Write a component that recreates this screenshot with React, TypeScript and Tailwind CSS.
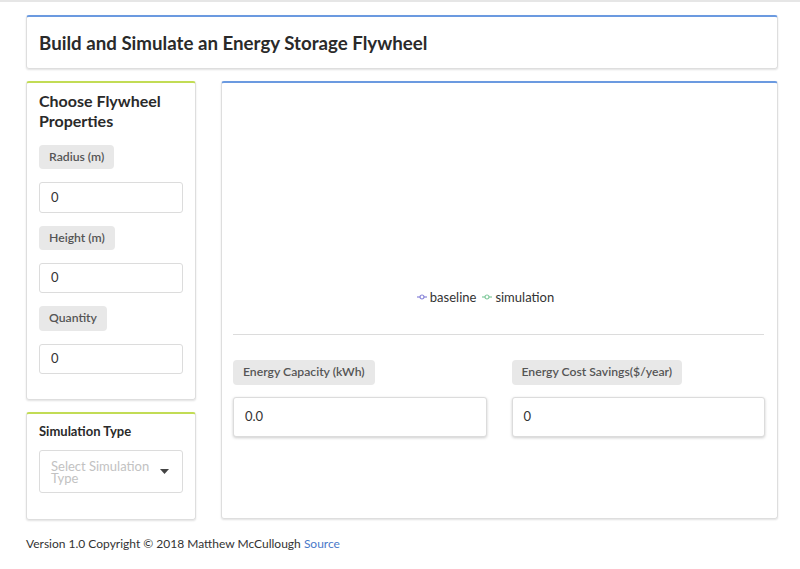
const font = { fontFamily: "Lato, 'Open Sans', sans-serif" };

function Pill({ children, h = "h-[24px]" }: { children: string; h?: string }) {
  return (
    <span className={`inline-flex ${h} items-center self-start rounded bg-[#e8e8e8] px-[10px] text-[12.2px] font-semibold text-[#555]`}>
      {children}
    </span>
  );
}

function Field({ value, h = "h-[31px]", shadow = false }: { value: string; h?: string; shadow?: boolean }) {
  return (
    <div
      className={`flex ${h} items-center rounded-[3px] border border-[#dcdcdc] bg-white px-[11px] text-[13px] text-[#333] ${
        shadow ? "shadow-[0_1px_3px_rgba(0,0,0,0.2)]" : ""
      }`}
    >
      {value}
    </div>
  );
}

function LegendIcon({ color }: { color: string }) {
  return (
    <svg width="10" height="10" viewBox="0 0 10 10" className="mr-[3px]">
      <line x1="0" y1="5" x2="10" y2="5" stroke={color} strokeWidth="1.2" />
      <circle cx="5" cy="5" r="2" fill="white" stroke={color} strokeWidth="1.2" />
    </svg>
  );
}

export default function App() {
  return (
    <div className="min-h-[569px] border-t-2 border-[#e6e6e6] bg-white px-[26px] pt-[13px] text-[#333]" style={font}>
      <div className="flex w-[752px] flex-col gap-[12px]">
        <div className="flex h-[54px] items-center rounded-[3px] border border-[#dedede] border-t-2 border-t-[#6b9ae0] px-[12px] shadow-[0_1px_2px_rgba(0,0,0,0.12)]">
          <h1 className="pt-[1px] text-[18.7px] font-bold text-[#2a2a2a]">Build and Simulate an Energy Storage Flywheel</h1>
        </div>

        <div className="flex gap-[25px]">
          <div className="flex w-[170px] flex-col gap-[12px]">
            <div className="flex flex-col gap-[13px] rounded-[3px] border border-[#dedede] border-t-2 border-t-[#c2dc55] px-[12px] pb-[25px] pt-[8px] shadow-[0_1px_2px_rgba(0,0,0,0.12)]">
              <h2 className="mb-[1px] text-[16px] font-bold leading-[20px] text-[#2a2a2a]">Choose Flywheel Properties</h2>
              <Pill>Radius (m)</Pill>
              <Field value="0" />
              <Pill>Height (m)</Pill>
              <Field value="0" h="h-[30px]" />
              <Pill h="h-[25px]">Quantity</Pill>
              <Field value="0" h="h-[30px]" />
            </div>

            <div className="flex h-[108px] flex-col gap-[11px] rounded-[3px] border border-[#dedede] border-t-2 border-t-[#c2dc55] px-[12px] pt-[9px] shadow-[0_1px_2px_rgba(0,0,0,0.12)]">
              <h3 className="text-[13px] font-bold leading-[16px] text-[#2a2a2a]">Simulation Type</h3>
              <div className="flex h-[43px] items-center justify-between rounded-[3px] border border-[#dcdcdc] pl-[11px] pr-[13px]">
                <span className="w-[100px] text-[13px] leading-[12px] text-[#c2c2c2]">Select Simulation Type</span>
                <svg width="9" height="5" viewBox="0 0 9 5">
                  <path d="M0 0 L9 0 L4.5 5 Z" fill="#444" />
                </svg>
              </div>
            </div>
          </div>

          <div className="flex h-[438px] flex-1 flex-col rounded-[3px] border border-[#dedede] border-t-2 border-t-[#6b9ae0] px-[11px] shadow-[0_1px_2px_rgba(0,0,0,0.12)]">
            <div className="flex h-[251px] items-end justify-center pb-[27px] pr-[28px] text-[13px] text-[#333]">
              <span className="flex items-center">
                <LegendIcon color="#8884d8" />
                baseline
              </span>
              <span className="ml-[6px] flex items-center">
                <LegendIcon color="#82ca9d" />
                simulation
              </span>
            </div>
            <div className="mr-[2px] border-t border-[#dcdcdc]" />
            <div className="mt-[25px] grid grid-cols-2 gap-[25px] pl-[0px] pr-[1px]">
              <div className="flex flex-col gap-[12px]">
                <Pill h="h-[25px]">Energy Capacity (kWh)</Pill>
                <Field value="0.0" h="h-[40px]" shadow />
              </div>
              <div className="flex flex-col gap-[12px]">
                <Pill h="h-[25px]">Energy Cost Savings($/year)</Pill>
                <Field value="0" h="h-[40px]" shadow />
              </div>
            </div>
          </div>
        </div>

        <p className="mt-[3px] text-[12px] text-[#333]">
          Version 1.0 Copyright © 2018 Matthew McCullough <a className="text-[#4a78c9]">Source</a>
        </p>
      </div>
    </div>
  );
}
